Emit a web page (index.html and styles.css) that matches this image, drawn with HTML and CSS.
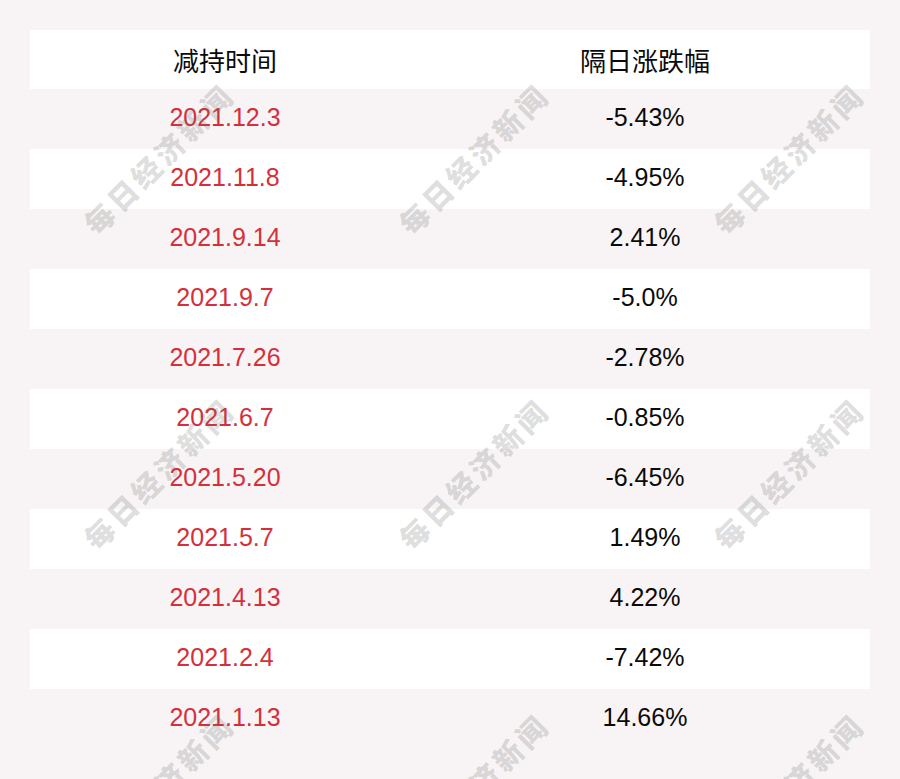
FILE: index.html
```html
<!DOCTYPE html>
<html lang="zh-CN">
<head>
<meta charset="utf-8">
<title>减持时间</title>
<link rel="stylesheet" href="styles.css">
</head>
<body>
<div class="page">
  <div class="table">
    <div class="row head"><div class="c1">减持时间</div><div class="c2">隔日涨跌幅</div></div>
    <div class="row"><div class="c1 date">2021.12.3</div><div class="c2">-5.43%</div></div>
    <div class="row"><div class="c1 date">2021.11.8</div><div class="c2">-4.95%</div></div>
    <div class="row"><div class="c1 date">2021.9.14</div><div class="c2">2.41%</div></div>
    <div class="row"><div class="c1 date">2021.9.7</div><div class="c2">-5.0%</div></div>
    <div class="row"><div class="c1 date">2021.7.26</div><div class="c2">-2.78%</div></div>
    <div class="row"><div class="c1 date">2021.6.7</div><div class="c2">-0.85%</div></div>
    <div class="row"><div class="c1 date">2021.5.20</div><div class="c2">-6.45%</div></div>
    <div class="row"><div class="c1 date">2021.5.7</div><div class="c2">1.49%</div></div>
    <div class="row"><div class="c1 date">2021.4.13</div><div class="c2">4.22%</div></div>
    <div class="row"><div class="c1 date">2021.2.4</div><div class="c2">-7.42%</div></div>
    <div class="row"><div class="c1 date">2021.1.13</div><div class="c2">14.66%</div></div>
  </div>
  <div class="marks">
    <span class="wm x1 y1">每日经济新闻</span>
    <span class="wm x2 y1">每日经济新闻</span>
    <span class="wm x3 y1">每日经济新闻</span>
    <span class="wm x1 y2">每日经济新闻</span>
    <span class="wm x2 y2">每日经济新闻</span>
    <span class="wm x3 y2">每日经济新闻</span>
    <span class="wm x1 y3">每日经济新闻</span>
    <span class="wm x2 y3">每日经济新闻</span>
    <span class="wm x3 y3">每日经济新闻</span>
  </div>
</div>
</body>
</html>
```

FILE: styles.css
```css
html, body {
  margin: 0;
  padding: 0;
  background: #f8f4f5;
}
.page {
  position: relative;
  width: 900px;
  height: 779px;
  overflow: hidden;
  padding: 30px;
  box-sizing: border-box;
}
.table {
  display: flex;
  flex-direction: column;
}
.row {
  display: grid;
  grid-template-columns: 390px 450px;
  height: 60px;
  box-sizing: border-box;
  padding-bottom: 3px;
  align-items: center;
  text-align: center;
  font-family: "Liberation Sans", Arial, "Noto Sans CJK SC", sans-serif;
  font-size: 25px;
  color: #0a0a0a;
}
.row:nth-child(even) {
  background: #f8f4f5;
}
.row:nth-child(odd) {
  background: #ffffff;
}
.row.head {
  background: #ffffff;
  height: 59px;
  padding-bottom: 1px;
  font-family: "Noto Sans CJK SC", sans-serif;
  font-size: 26px;
  font-weight: 400;
  color: #0a0a0a;
}
.date {
  color: #d5303a;
}
.marks {
  position: absolute;
  inset: 0;
  pointer-events: none;
}
.wm {
  position: absolute;
  transform: translate(-50%, -50%) rotate(-45deg);
  font-family: "Noto Sans CJK SC", serif;
  font-weight: 900;
  font-size: 29px;
  letter-spacing: 4px;
  color: rgba(110, 110, 110, 0.24);
  white-space: nowrap;
}
.x1 { left: 158px; }
.x2 { left: 473px; }
.x3 { left: 788px; }
.y1 { top: 158px; }
.y2 { top: 473px; }
.y3 { top: 788px; }
```
